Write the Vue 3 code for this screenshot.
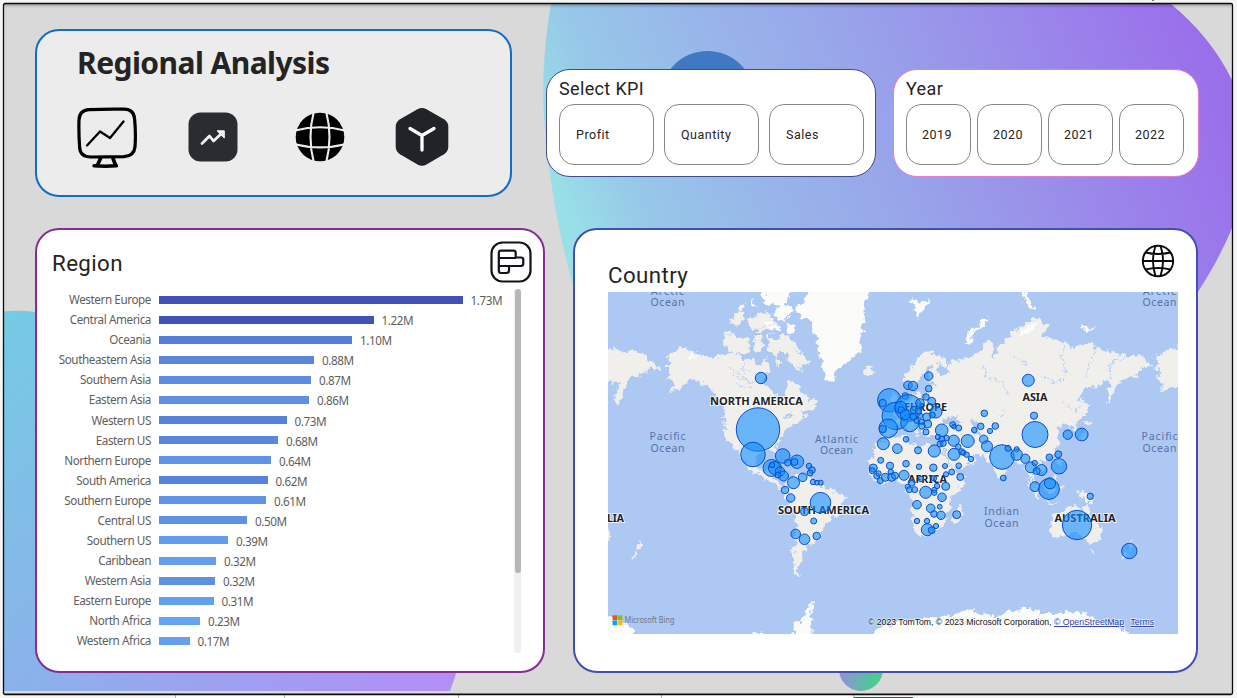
<script setup>
const kpis = ['Profit', 'Quantity', 'Sales']
const years = ['2019', '2020', '2021', '2022']

const regions = [
  ['Western Europe', '1.73M', 303.5, '#4050b5'],
  ['Central America', '1.22M', 214.5, '#4253b7'],
  ['Oceania', '1.10M', 193, '#557dd6'],
  ['Southeastern Asia', '0.88M', 155, '#5a86da'],
  ['Southern Asia', '0.87M', 152, '#5c8cdd'],
  ['Eastern Asia', '0.86M', 150, '#5d90e1'],
  ['Western US', '0.73M', 127.5, '#5681d9'],
  ['Eastern US', '0.68M', 119, '#5a87dc'],
  ['Northern Europe', '0.64M', 112, '#5f94e4'],
  ['South America', '0.62M', 108.5, '#5883da'],
  ['Southern Europe', '0.61M', 107, '#5f93e3'],
  ['Central US', '0.50M', 88, '#5f92e2'],
  ['Southern US', '0.39M', 69, '#639ceb'],
  ['Caribbean', '0.32M', 57, '#649eec'],
  ['Western Asia', '0.32M', 56, '#5e91e2'],
  ['Eastern Europe', '0.31M', 54.5, '#649fed'],
  ['North Africa', '0.23M', 41, '#66a3f0'],
  ['Western Africa', '0.17M', 30.5, '#64a0ee'],
]

const bubbles = [
  [761, 378, 5.7], [758, 429.5, 21.7], [753, 454.5, 12.3], [782.7, 456, 7.3], [797, 461.7, 6.7],
  [794.5, 462, 3.5], [787.7, 462.7, 3.3], [771.5, 468, 8.5], [775, 468, 6.5], [772, 465, 2.7],
  [780, 471.5, 4.7], [783.5, 476, 5], [778, 475, 3], [793.5, 482.7, 6], [802.7, 477.3, 4.3],
  [809, 466, 2.8], [812, 470, 3.3], [810, 473, 3], [813, 482, 2.7], [817, 482.7, 2.4],
  [820.7, 482.7, 2.5], [785, 490, 3.8], [790.7, 498, 4.2], [820.5, 502.7, 10.3], [804.5, 511.7, 4],
  [813.7, 521, 3], [795.7, 534, 4.8], [804.5, 539.3, 5.3], [816.7, 536, 3.8],
  [928.7, 376, 4.3], [908, 385.3, 4.3], [913, 386, 4.7], [928.7, 388.7, 3.3], [905.3, 396, 3.3],
  [926, 397, 3.3], [931.7, 401.3, 4], [889.3, 400.3, 11.7], [882.7, 403, 3.7], [895.7, 416, 13.7],
  [908.5, 408, 13.5], [900.7, 407.3, 6], [901.3, 410, 3.3], [909.7, 422.7, 9], [888.3, 428.3, 9.3],
  [882.7, 429, 3.7], [905.3, 414.7, 5], [936, 412, 6], [932.3, 415, 3], [914, 410, 3.6],
  [920, 403, 4.3], [913.3, 416.7, 3.3], [916.7, 420.7, 2.7], [920, 415.7, 2.7], [918.5, 411, 3],
  [921.7, 422, 2.7], [926.7, 417, 4], [927.7, 424, 4], [922, 426, 3.2], [926, 432, 3],
  [941.7, 430.3, 6.3], [952.7, 424.7, 3], [954, 426.7, 2.3], [958.7, 428, 3], [967.7, 441, 6.5],
  [974.3, 430, 2.8], [883.3, 443.7, 6], [897.3, 448.7, 4.8], [906, 439.3, 2.8], [918, 450.3, 3.5],
  [934.3, 451, 6.1], [953.7, 440.7, 5.6], [954, 454.3, 6], [938, 437, 2.7], [941.7, 439.3, 3],
  [946.7, 438, 2.7], [940, 444, 3], [943.3, 443.3, 3], [958.3, 446.7, 2.7], [961.7, 451.7, 3],
  [963.3, 452.7, 2.7], [966.7, 454.7, 2.7], [971, 459, 2.7], [880.7, 460.3, 3],
  [984.3, 413.3, 3.3], [980.7, 426.3, 3.3], [995.3, 426, 3.3], [990, 431, 2.6], [983.7, 439.3, 4.2],
  [987, 446.3, 5.5], [1028.3, 380.3, 6], [1034, 415.7, 3.6], [1035, 434.5, 13], [1067.7, 434.7, 4.7],
  [1081.7, 434.5, 6.4], [1002, 457, 12.3], [1008, 448.3, 3], [1016.7, 449.3, 2.6], [1016.7, 454.7, 5.7],
  [1025.3, 458.7, 4.6], [1049.3, 457.3, 3.3], [1058.3, 454.3, 3.5], [1059, 466.3, 7.7],
  [1030.7, 467.3, 5.5], [1034.7, 463, 2.7], [1041.5, 470, 5.5], [1036.7, 471, 3.5], [1035, 486.7, 5],
  [1049, 489, 10.4], [1050, 483.3, 5.6], [1090.3, 496.3, 3.2], [1077, 525, 14.7], [1129.3, 551, 7.7],
  [1003.3, 478, 2.9], [890, 465.7, 3.6], [906, 463.7, 3.3], [919, 466.7, 2.7], [933.3, 467.7, 3.7],
  [945, 466, 2.5], [958.7, 465.7, 2.8], [960.3, 477, 3.5], [951.7, 472, 2.9], [946, 474.3, 2.6],
  [934, 478.3, 2.7], [945.7, 486.3, 4], [937, 486, 2.7], [873.3, 468, 4], [872.3, 470.7, 3],
  [876.7, 476, 3], [878.5, 473.5, 2.7], [880.3, 480.7, 3], [885.3, 477.3, 4], [890.7, 472, 2.7],
  [891.7, 477.3, 4], [895, 475.7, 3.5], [904, 475.3, 5], [911.7, 482.7, 3.5], [907.7, 486.7, 2.5],
  [909.3, 489.7, 3], [914.7, 489.7, 3], [921, 479, 2.7], [925.7, 492.3, 6], [934.3, 490, 2.7],
  [934.3, 492.7, 2.7], [942, 497.3, 4.3], [917, 504.7, 4.3], [930.7, 508.3, 4.3], [939.7, 506.7, 2.4],
  [934, 514, 3.3], [941, 515.3, 4.2], [956.7, 514.7, 4], [917, 521, 2.7], [927, 521, 2.7],
  [927.3, 529.7, 6], [931.7, 530.3, 3.4], [936, 526, 2.6],
]

// [text, start x, baseline y, width]
const continents = [
  ['NORTH AMERICA', 710, 404.7, 93],
  ['SOUTH AMERICA', 778, 514, 91],
  ['EUROPE', 904, 410.7, 43],
  ['ASIA', 1022.5, 400.7, 25],
  ['AFRICA', 908, 483.3, 39],
  ['AUSTRALIA', 1054.5, 521.7, 61],
  ['LIA', 607, 521.7, 17],
]
const oceans = [
  ['Arctic', 651, 294.5, 33], ['Ocean', 650.5, 306, 34],
  ['Arctic', 1143, 294.5, 33], ['Ocean', 1142.5, 306, 34],
  ['Pacific', 649.5, 440, 36], ['Ocean', 650.5, 452, 34],
  ['Atlantic', 815, 442.5, 43], ['Ocean', 820, 454, 33],
  ['Pacific', 1141.5, 440, 36], ['Ocean', 1142.5, 452, 34],
  ['Indian', 984, 515, 35], ['Ocean', 984.5, 527, 34],
]
</script>

<template>
  <div class="screen">
    <svg class="backdrop" viewBox="0 0 1237 698" width="1237" height="698">
      <defs>
        <linearGradient id="sky" gradientUnits="userSpaceOnUse" x1="560" y1="195" x2="1168" y2="-40">
          <stop offset="0" stop-color="#98dfe7" />
          <stop offset=".11" stop-color="#97c8e8" />
          <stop offset=".28" stop-color="#98b7e9" />
          <stop offset=".48" stop-color="#98a6e9" />
          <stop offset=".76" stop-color="#9a88ea" />
          <stop offset="1" stop-color="#9a6fea" />
        </linearGradient>
        <linearGradient id="lagoon" gradientUnits="userSpaceOnUse" x1="0" y1="330" x2="370" y2="740">
          <stop offset="0" stop-color="#76cae4" />
          <stop offset=".5" stop-color="#8ab2ea" />
          <stop offset="1" stop-color="#b18ff6" />
        </linearGradient>
        <linearGradient id="drop" x1="0" x2="1" y1="0" y2=".2">
          <stop offset=".05" stop-color="#9b87e9" />
          <stop offset=".9" stop-color="#4cca90" />
        </linearGradient>
        <linearGradient id="topShade" x1="0" x2="0" y1="0" y2="1">
          <stop offset="0" stop-color="#000" stop-opacity=".25" />
          <stop offset="1" stop-color="#000" stop-opacity="0" />
        </linearGradient>
      </defs>
      <rect width="1237" height="698" fill="#f5f5f5" />
      <rect x="1152" width="2" height="1" fill="#777" />
      <rect x="175" y="695" width="679" height="3" fill="#fff" />
      <path d="M175.5 695v3M284.5 695v3M458.5 695v3M661.5 695v3M853.5 695v3" stroke="#b5b5b5" />
      <rect x="854" y="697" width="59" height="1" fill="#1c6b50" />
      <rect x="3.5" y="3.5" width="1229" height="691" rx="1.5" fill="#d9d9d9" />
      <path d="M551 4C543 50 541 95 546 140C551 190 560 240 575 292V320H1185L1198 292C1212 270 1223 250 1232 228V80C1217 49 1197 26 1171 4Z" fill="url(#sky)" />
      <circle cx="707.5" cy="98" r="47" fill="#4078c4" />
      <path d="M4 311.5Q20 310 36 312L200 330L462 640Q461 663 450 691H4Z" fill="url(#lagoon)" />
      <circle cx="861" cy="669" r="22" fill="url(#drop)" />
      <rect x="4" y="4" width="1228" height="4" fill="url(#topShade)" />
      <path d="M4 693.5H1232" stroke="#999" />
      <rect x="3.5" y="3.5" width="1229" height="691" rx="1.5" fill="none" stroke="#0c0c0c" stroke-width="1.3" />
    </svg>

    <main class="board">
      <section class="top">
        <header class="card heading">
          <h1>Regional Analysis</h1>
          <div class="icons">
            <svg width="62" height="62" viewBox="0 0 62 62" fill="none" stroke="#000" stroke-linecap="round" stroke-linejoin="round">
              <path d="M12 2.6Q31 1.8 47 2.2Q57 2.4 57.6 12Q59 27 58 40Q57 49 47 49.6Q30 50 14 50Q3 50 2.6 40Q1.6 26 2 13Q2.4 3 12 2.6Z" stroke-width="3.2" />
              <path d="M10 38.5L23 24.5L33 31L46.500 14.500" stroke-width="2.300" />
              <path d="M23.500 51.500L20.500 58M36 51.500L38.500 58" stroke-width="3.6" />
              <path d="M17 58.800Q28 59.700 39.500 58.800" stroke-width="3.400" />
            </svg>
            <svg width="50" height="50" viewBox="0 0 50 50">
              <rect x=".5" y=".5" width="49" height="49" rx="12" fill="#292c31" />
              <path d="M14 31.500L21.500 24L25.500 29L33.500 21.500" fill="none" stroke="#f3f3f3" stroke-width="2.800" stroke-linecap="round" stroke-linejoin="round" />
              <path d="M29 18.800H36.300V26Z" fill="#f3f3f3" stroke="#f3f3f3" stroke-width="1" stroke-linejoin="round" />
            </svg>
            <svg width="50" height="50" viewBox="0 0 50 50">
              <circle cx="25" cy="25" r="24.300" fill="#000" />
              <g fill="none" stroke="#ececec" stroke-width="2.100">
                <path d="M19 -1Q12 25 19 51M31 -1Q38 25 31 51M0 18.500Q25 12 50 18.500M0 32.300Q25 38.500 50 32.300" />
              </g>
            </svg>
            <svg width="54" height="60" viewBox="0 0 54 60">
              <path d="M22.500 2.200Q27 -.2 31.500 2.200L49 12.300Q53.300 15 53.300 20V39.500Q53.300 44.500 49 47.300L31.500 57.600Q27 60 22.500 57.600L5 47.300Q.7 44.500 .7 39.500V20Q.7 15 5 12.300Z" fill="#202429" />
              <path d="M15 21.500L27 28.500L39 21.500M27 28.500V43" fill="none" stroke="#fff" stroke-width="3.300" stroke-linecap="round" stroke-linejoin="round" />
            </svg>
          </div>
        </header>

        <section class="card slicer kpi">
          <h3>Select KPI</h3>
          <div class="options">
            <button v-for="k in kpis" :key="k">{{ k }}</button>
          </div>
        </section>

        <section class="card slicer year">
          <h3>Year</h3>
          <div class="options">
            <button v-for="y in years" :key="y">{{ y }}</button>
          </div>
        </section>
      </section>

      <section class="bottom">
        <section class="card region">
          <header>
            <h2>Region</h2>
            <svg width="42" height="42" viewBox="0 0 42 42" fill="none" stroke="#111318" stroke-width="2.200" stroke-linejoin="round">
              <rect x="1.500" y="1.500" width="39" height="39" rx="11" />
              <path d="M8.800 12Q8.800 9.700 11 9.700H23.500Q25.700 9.700 25.700 12V16.500H31Q33.300 16.500 33.300 18.700V22.500Q33.300 25 31 25H19V29.500Q19 32 16.500 32H11Q8.800 32 8.800 29.500ZM9 17H26M9 25H19" />
            </svg>
          </header>
          <div class="chart">
            <div class="rows">
              <div v-for="r in regions" :key="r[0]" class="row">
                <span class="name">{{ r[0] }}</span>
                <span class="bar" :style="{ width: r[2] + 'px', background: r[3] }"></span>
                <span class="value">{{ r[1] }}</span>
              </div>
            </div>
            <div class="track"><div class="thumb"></div></div>
          </div>
        </section>

        <section class="card country">
          <header>
            <h2>Country</h2>
            <svg width="34" height="34" viewBox="0 0 34 34" fill="none" stroke="#0a0a0a" stroke-width="1.900">
              <circle cx="17" cy="17" r="15.200" />
              <path d="M1.800 17H32.200M14.500 2Q9.500 17 14.500 32M19.500 2Q24.500 17 19.500 32M4.500 8.500Q17 11.500 29.500 8.500M4.500 25.500Q17 22.500 29.500 25.500" />
            </svg>
          </header>
          <svg class="map" width="570" height="342" viewBox="608 292 570 342">
            <defs>
              <filter id="coast" filterUnits="userSpaceOnUse" x="590" y="280" width="600" height="370">
                <feTurbulence type="fractalNoise" baseFrequency=".17" numOctaves="3" seed="4" />
                <feDisplacementMap in="SourceGraphic" scale="10" xChannelSelector="R" yChannelSelector="G" />
              </filter>
            </defs>
            <rect x="608" y="292" width="570" height="342" fill="#adc8f2" />
            <g filter="url(#coast)">
              <g fill="#f0efec">
                <path d="M600 346L620 350L625 353L633 348L640 354L650 359L660 367L657 370L650 367L643 375L633 378L628 380L623 390L617 405L615 395L620 383L600 379Z" />
                <path d="M667 357L680 348L694 352L707 358L723 356L733 352L743 360L753 358L760 367L766 358L770 370L763 380L770 390L780 394L784 402L786 392L787 380L797 383L807 397L817 403L812 410L800 411L807 417L797 423L787 427L782 436L776 445L779 458L774 452L765 450L757 455L756 466L761 472L767 470L770 466L775 467L773 476L779 480L782 488L789 488L785 492L774 484L762 477L750 470L742 458L734 448L727 440L724 430L723 415L725 405L715 395L708 386L700 382L690 380L680 388L668 394L675 385L667 378L672 372L664 368L673 363Z" />
                <path d="M786 480L800 473L813 478L823 487L845 496L843 503L838 515L827 522L820 537L813 545L807 547L803 555L800 564L797 572L802 578L794 573L793 550L797 527L796 517L788 503L782 493Z" />
                <path d="M780 332L790 339L800 352L808 362L802 368L795 360L787 352L778 348ZM722 342L727 331L738 336L752 349L745 356L730 352ZM752 338L760 334L764 347L757 353ZM768 335L779 340L778 357L768 350ZM727 321L740 311L746 320L735 326ZM748 320L765 312L779 324L770 331L752 331ZM770 343L780 345L786 352L776 352ZM738 342L748 338L750 346ZM789 351L797 362L802 372L793 366L787 357ZM774 358L782 362L778 368Z" />
                <path d="M863 369L868 366L874 369L870 375L864 374Z" />
                <path d="M903 385L904 375L910 370L917 358L927 350L937 354L947 360L947 366L938 363L940 377L948 373L948 365L953 360L967 358L980 353L988 340L992 343L993 360L997 347L1007 337L1023 325L1037 317L1048 327L1042 335L1053 340L1067 342L1070 348L1087 343L1097 348L1110 352L1130 357L1140 355L1152 367L1143 368L1135 377L1123 380L1117 384L1113 393L1108 405L1107 395L1111 384L1103 380L1098 387L1085 388L1078 397L1088 403L1087 412L1078 421L1076 431L1070 428L1067 422L1057 428L1059 443L1055 454L1046 460L1040 461L1045 470L1038 475L1033 470L1033 479L1040 490L1035 487L1028 473L1023 463L1015 462L1006 469L1002 479L998 478L993 467L987 458L975 455L974 462L962 468L954 470L948 458L942 444L941 437L927 437L920 428L915 424L919 435L914 436L906 425L896 426L890 437L883 436L884 423L895 422L893 411L903 405L911 399L914 391L920 396L928 396L926 388L938 385L930 382L927 375L932 367L925 368L920 378L916 389L910 389Z" />
                <path d="M890 404L893 391L899 400L901 408ZM883 401L888 399L888 406L883 407Z" />
                <path d="M879 441L906 436L908 444L920 448L926 444L942 447L947 459L954 472L959 476L969 475L961 487L951 499L950 510L944 520L938 532L925 537L918 537L915 525L911 512L913 501L907 492L904 484L895 481L880 484L871 475L869 467L873 452Z" />
                <path d="M960 505L962 511L957 524L952 521L954 512Z" />
                <path d="M1050 520L1060 513L1069 507L1078 505L1082 512L1086 502L1093 516L1102 530L1098 543L1090 544L1082 537L1073 533L1060 537L1052 539ZM1091 550L1095 551L1093 555ZM1130 540L1134 546L1129 550ZM1126 551L1128 555L1121 560ZM1077 491L1087 493L1095 502L1085 500ZM1044 480L1056 476L1055 492L1046 491ZM1026 478L1040 494L1040 500L1030 488ZM1041 500L1056 503L1050 504ZM1055 459L1060 458L1062 470ZM1085 420L1092 422L1087 426ZM1086 428L1085 438L1077 441ZM1060 486L1064 485L1061 494Z" />
                <path d="M638 540L644 546L639 550ZM637 551L639 554L631 561ZM600 525L610 528L611 534L606 541H600ZM786 465L800 466L797 470Z" />
                <path d="M1155 357L1165 351L1180 347V388L1168 387L1158 393L1164 384L1157 379L1161 372L1154 368L1160 363Z" />
              </g>
              <g fill="#fbfbfa">
                <path d="M795 308L810 293V286H872L863 307L865 320L860 340L862 350L852 357L843 365L835 372L833 382L827 381L823 370L820 353L815 337L812 323L798 315Z" />
                <path d="M760 294L775 286H797L785 303L794 310L783 322L772 313L782 306L767 304ZM785 323L797 327L790 335ZM910 299L922 302L931 298L923 310L918 319L914 309ZM965 345L968 332L980 323L990 317L985 325L973 332L970 345ZM1020 292L1026 290L1030 302L1037 311L1028 307ZM1080 326L1096 329L1086 332ZM1023 329L1038 321L1032 332L1017 336ZM738 307L744 304L742 312ZM752 298L757 304L751 308ZM764 322L774 320L780 329L770 330ZM686 357L700 353L690 361Z" />
                <path d="M600 617L612 616L620 621L634 629V646H600ZM750 636L755 631L763 632V642H745ZM792 646L794 622L800 623L807 607L813 601L811 614L812 646ZM872 646L877 629L900 622L930 618L957 614L967 608L976 613L993 617L1007 613L1027 607L1040 613L1057 613L1077 611L1090 615L1100 622L1117 627L1129 634V646Z" />
              </g>
              <g fill="#adc8f2">
                <path d="M945 419L952 416L965 422L956 425L945 424ZM971 421L976 419L980 436L974 433ZM765 372L781 375L786 386L784 394L777 398L772 388L767 386ZM783 416L792 413L790 418ZM975 458L980 455L976 462Z" />
              </g>
              <g fill="none" stroke="#b9cff2" stroke-width="1">
                <path d="M983 365L986 377L1000 382L1008 394M1065 345L1062 360L1068 378L1055 382L1040 376M1096 350L1089 365L1085 378M1014 355L1020 362L1026 364M1125 358L1112 362L1109 378M1063 400L1076 412L1083 402M998 415L1005 412M735 370L750 372M738 385L755 388M728 365L738 378L752 382M745 362L742 376L758 384" />
                <path d="M648 405L663 401L678 394M1145 406L1160 400L1172 394M715 340L745 330L790 322" opacity=".6" />
              </g>
            </g>
            <g class="oceans">
              <text v-for="(o, i) in oceans" :key="i" :x="o[1]" :y="o[2]" :textLength="o[3]">{{ o[0] }}</text>
            </g>
            <g class="continents">
              <text v-for="c in continents" :key="c[0]" :x="c[1]" :y="c[2]" :textLength="c[3]" lengthAdjust="spacingAndGlyphs">{{ c[0] }}</text>
            </g>
            <g class="bubbles">
              <circle v-for="(b, i) in bubbles" :key="i" :cx="b[0]" :cy="b[1]" :r="b[2]" />
            </g>
            <path d="M612.500 615.300h4.700v4.700h-4.700z" fill="#f25022" />
            <path d="M617.700 615.300h4.700v4.700h-4.700z" fill="#7fba00" opacity=".85" />
            <path d="M612.500 620.500h4.700v4.700h-4.700z" fill="#00a4ef" />
            <path d="M617.700 620.500h4.700v4.700h-4.700z" fill="#ffb900" />
            <text class="bing" x="624.500" y="623.300" textLength="50" lengthAdjust="spacingAndGlyphs">Microsoft Bing</text>
            <g class="credits">
              <text x="868" y="625" textLength="183.500" lengthAdjust="spacingAndGlyphs">© 2023 TomTom, © 2023 Microsoft Corporation,</text>
              <text class="link" x="1054" y="625" textLength="70" lengthAdjust="spacingAndGlyphs">© OpenStreetMap</text>
              <text class="link" x="1130.500" y="625" textLength="23.500" lengthAdjust="spacingAndGlyphs">Terms</text>
            </g>
          </svg>
        </section>
      </section>
    </main>
  </div>
</template>

<style>
body {
  margin: 0;
  overflow: hidden;
}
</style>

<style scoped>
.screen {
  position: relative;
  width: 1237px;
  height: 698px;
  overflow: hidden;
  font-family: Roboto, "Liberation Sans", sans-serif;
  color: #252423;
}
.backdrop {
  position: absolute;
  inset: 0;
}
.board {
  position: relative;
  box-sizing: border-box;
  height: 698px;
  padding: 29px 39px 25px 35px;
  display: flex;
  flex-direction: column;
  gap: 31px;
}
.card {
  box-sizing: border-box;
  flex-shrink: 0;
  background: #fff;
  border-radius: 24px;
}
h1, h2, h3 {
  margin: 0;
  font-weight: 400;
}
.top {
  display: flex;
  height: 168px;
}
.heading {
  width: 477px;
  height: 168px;
  border: 2px solid #126cc4;
  background: #ececec;
  padding: 9px 40px;
}
.heading h1 {
  font: 700 30px/46px "Noto Sans", "Open Sans", sans-serif;
  letter-spacing: -0.55px;
  white-space: nowrap;
}
.icons {
  display: flex;
  align-items: center;
  height: 62px;
  margin-top: 20px;
}
.icons svg:nth-child(1) { margin-top: 2px; }
.icons svg:nth-child(2) { margin-left: 49px; }
.icons svg:nth-child(3) { margin-left: 57px; }
.icons svg:nth-child(4) { margin-left: 50px; margin-top: -1px; }
.slicer {
  height: 108px;
  margin-top: 40px;
  padding: 9px 12px;
}
.kpi {
  width: 330px;
  margin-left: 34px;
  border: 1px solid #414b86;
}
.year {
  width: 306px;
  margin-left: 17px;
  border: 1px solid #e07ed0;
}
.year { padding-left: 12px; }
.slicer h3 {
  font-size: 18px;
  line-height: 20px;
  letter-spacing: 0.35px;
}
.options {
  display: flex;
  gap: 10px;
  margin-top: 5px;
}
.year .options { gap: 6px; }
.options button {
  box-sizing: border-box;
  flex-shrink: 0;
  width: 95px;
  height: 61px;
  padding: 0 0 0 16px;
  border: 1px solid #868686;
  border-radius: 15px;
  background: #fff;
  color: #252423;
  font: 12.5px Roboto, "Liberation Sans", sans-serif;
  letter-spacing: 0.5px;
  text-align: left;
}
.year .options button {
  width: 65px;
  padding-left: 15px;
}
.bottom {
  display: flex;
  justify-content: space-between;
  height: 445px;
}
.region {
  width: 510px;
  border: 2px solid #862d94;
  padding: 11px 11px 0 0;
}
.region header, .country header {
  display: flex;
  justify-content: space-between;
  align-items: flex-start;
}
h2 {
  font-size: 22.3px;
  line-height: 28px;
  letter-spacing: 0.4px;
}
.region h2 {
  margin: 8px 0 0 15px;
}
.region header { height: 48px; }
.chart {
  display: flex;
  justify-content: space-between;
  padding-right: 11px;
}
.rows {
  font: 11.7px "Noto Sans", "Open Sans", sans-serif;
  letter-spacing: -0.42px;
  color: #605e5c;
}
.row {
  display: flex;
  align-items: center;
  height: 20.09px;
}
.name {
  width: 114px;
  text-align: right;
  white-space: nowrap;
}
.bar {
  height: 8px;
  margin: 1px 8px 0;
}
.value {
  position: relative;
  top: 1px;
}
.track {
  width: 7px;
  height: 364px;
  border-radius: 3px;
  background: #f0f0f0;
}
.thumb {
  width: 6px;
  height: 284px;
  margin-left: 1px;
  border-radius: 3px;
  background: #b6b6b6;
}
.country {
  width: 625px;
  border: 2px solid #414fb3;
  padding: 14px 18px 0 33px;
}
.country header {
  height: 48px;
  padding-right: 3px;
}
.country h2 {
  margin-top: 17px;
}
.map {
  display: block;
}
.oceans text {
  font: 10.5px "Noto Sans", sans-serif;
  fill: #5873a9;
}
.continents text {
  font: 700 11.3px "Noto Sans", sans-serif;
  fill: #222;
  stroke: #fff;
  stroke-opacity: 0.75;
  stroke-width: 2px;
  paint-order: stroke;
}
.bubbles circle {
  fill: #118dff;
  fill-opacity: 0.6;
  stroke: #0b4fc8;
  stroke-width: 1;
}
.bing {
  font: 9px "Noto Sans", sans-serif;
  fill: #737780;
}
.credits text {
  font: 9.5px "Liberation Sans", sans-serif;
  fill: #111;
  stroke: #fff;
  stroke-opacity: 0.6;
  stroke-width: 1.5px;
  paint-order: stroke;
}
.credits .link {
  fill: #2b41b0;
  text-decoration: underline;
}
</style>
